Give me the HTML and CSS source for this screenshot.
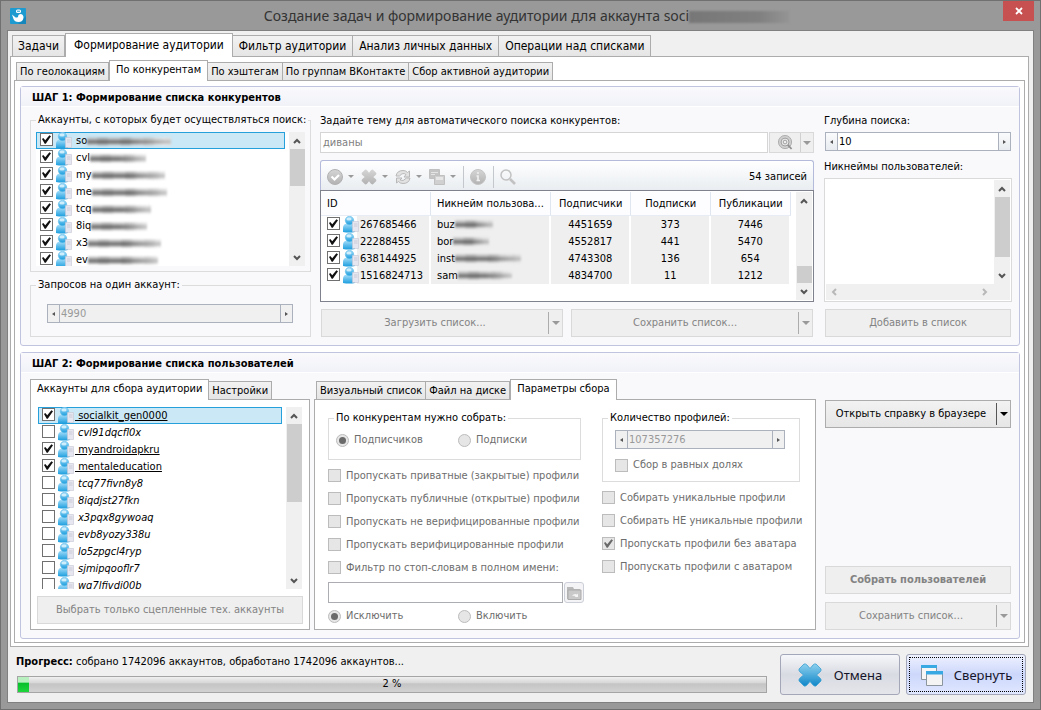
FILE: index.html
```html
<!DOCTYPE html>
<html lang="ru">
<head>
<meta charset="utf-8">
<title>Создание задач и формирование аудитории</title>
<link rel="stylesheet" href="styles.css">
</head>
<body>
<svg class="defs" width="0" height="0" aria-hidden="true">
  <defs>
    <linearGradient id="gBlue" x1="0" y1="0" x2="0" y2="1"><stop offset="0" stop-color="#a6defa"/><stop offset="1" stop-color="#1c9ede"/></linearGradient>
    <linearGradient id="gX" x1="0" y1="0" x2="0" y2="1"><stop offset="0" stop-color="#8dd0ee"/><stop offset="1" stop-color="#0f86c8"/></linearGradient>
    <linearGradient id="gGray" x1="0" y1="0" x2="0" y2="1"><stop offset="0" stop-color="#d6d6d6"/><stop offset="1" stop-color="#b2b2b2"/></linearGradient>
    <symbol id="user" viewBox="0 0 16 17">
      <path d="M0 16V12Q0 8 3.500 7.500H9Q12 8 12 11V16Q6 17 0 16Z" fill="url(#gBlue)"/>
      <circle cx="6.500" cy="4.500" r="4.200" fill="url(#gBlue)" stroke="#62bce8" stroke-width=".6"/>
      <ellipse cx="6" cy="3" rx="2.600" ry="1.600" fill="#e4f6fe" opacity=".8"/>
      <path d="M9.500 5.500H15.500V15.500H9.500Z" fill="#e6e6f0" stroke="#c6c6d4" stroke-width=".6"/>
      <path d="M11 8H14.500M11 10H14.500" stroke="#c4c4d2" stroke-width=".8"/>
    </symbol>
    <symbol id="cross" viewBox="0 0 24 24">
      <path d="M1 6L6 1Q7.500 .5 9 2L12 5.500L15 2Q16.500 .5 18 1L23 6Q23.500 7.500 22 9L18.500 12L22 15Q23.500 16.500 23 18L18 23Q16.500 23.500 15 22L12 18.500L9 22Q7.500 23.500 6 23L1 18Q.5 16.500 2 15L5.500 12L2 9Q.5 7.500 1 6Z"/>
    </symbol>
    <symbol id="up" viewBox="0 0 8 6"><path d="M1 5L4 2L7 5" fill="none" stroke="currentColor" stroke-width="2"/></symbol>
    <symbol id="down" viewBox="0 0 8 6"><path d="M1 1L4 4L7 1" fill="none" stroke="currentColor" stroke-width="2"/></symbol>
  </defs>
</svg>

<div class="window">
  <header class="titlebar">
    <svg class="app-icon" viewBox="0 0 16 16"><rect width="16" height="16" rx="1" fill="#1d9bd1"/><path d="M8 16L16 8V16Z" fill="#1587bd"/><rect x="6" y="1.500" width="5" height="3.500" rx="1.500" fill="#fff"/><path d="M7 3.200H10" stroke="#1d9bd1"/><path d="M2 6.500L5 9Q6 10 8 9Q8 6 11 6Q13.500 6.500 13.500 9.500Q13 14 8.500 14Q4.500 14 3.500 11Z" fill="#fff"/></svg>
    <h1 class="title">Создание задач и формирование аудитории для аккаунта soci<span class="smudge smudge-title"></span></h1>
    <button class="close" aria-label="Закрыть"><svg viewBox="0 0 8 8"><path d="M1 1L7 7M7 1L1 7" stroke="#fff" stroke-width="1.800"/></svg></button>
  </header>

  <main class="client">
    <nav class="tabs tabs-main">
      <button class="tab">Задачи</button>
      <button class="tab active">Формирование аудитории</button>
      <button class="tab">Фильтр аудитории</button>
      <button class="tab">Анализ личных данных</button>
      <button class="tab">Операции над списками</button>
    </nav>
    <div class="panel panel-main">
      <nav class="tabs">
        <button class="tab">По геолокациям</button>
        <button class="tab active">По конкурентам</button>
        <button class="tab">По хэштегам</button>
        <button class="tab">По группам ВКонтакте</button>
        <button class="tab">Сбор активной аудитории</button>
      </nav>
      <div class="panel panel-sub">

        <section class="step">
          <h2>ШАГ 1: Формирование списка конкурентов</h2>
          <div class="step-body step-one">
            <div class="col">
              <fieldset class="group group-list">
                <legend>Аккаунты, с которых будет осуществляться поиск:</legend>
                <div class="scroll-area area-one">
                  <ul class="list">
                    <li class="row selected"><label><input type="checkbox" checked><svg><use href="#user"/></svg>so<span class="smudge" style="width:84px"></span></label></li>
                    <li class="row"><label><input type="checkbox" checked><svg><use href="#user"/></svg>cvl<span class="smudge" style="width:56px"></span></label></li>
                    <li class="row"><label><input type="checkbox" checked><svg><use href="#user"/></svg>my<span class="smudge" style="width:73px"></span></label></li>
                    <li class="row"><label><input type="checkbox" checked><svg><use href="#user"/></svg>me<span class="smudge" style="width:75px"></span></label></li>
                    <li class="row"><label><input type="checkbox" checked><svg><use href="#user"/></svg>tcq<span class="smudge" style="width:59px"></span></label></li>
                    <li class="row"><label><input type="checkbox" checked><svg><use href="#user"/></svg>8iq<span class="smudge" style="width:56px"></span></label></li>
                    <li class="row"><label><input type="checkbox" checked><svg><use href="#user"/></svg>x3<span class="smudge" style="width:73px"></span></label></li>
                    <li class="row"><label><input type="checkbox" checked><svg><use href="#user"/></svg>ev<span class="smudge" style="width:70px"></span></label></li>
                  </ul>
                  <div class="vbar"><svg><use href="#up"/></svg><i class="thumb thumb-38"></i><svg class="end"><use href="#down"/></svg></div>
                </div>
              </fieldset>
              <fieldset class="group group-requests">
                <legend>Запросов на один аккаунт:</legend>
                <div class="spinner"><button class="spin prev" aria-label="Меньше" disabled></button><input type="text" value="4990" aria-label="Запросов на один аккаунт" disabled><button class="spin next" aria-label="Больше" disabled></button></div>
              </fieldset>
            </div>

            <div class="col">
              <label class="caption" for="topic">Задайте тему для автоматического поиска конкурентов:</label>
              <div class="search">
                <input id="topic" type="text" value="диваны" disabled>
                <div class="search-buttons">
                  <button class="find" aria-label="Найти" disabled><svg viewBox="0 0 16 16"><circle cx="7.500" cy="7.500" r="7" fill="#cfcfcf" stroke="#aaa"/><circle cx="7.500" cy="7.500" r="4.200" fill="#eee" stroke="#999"/><circle cx="7.500" cy="7.500" r="2" fill="none" stroke="#999"/><path d="M10.500 10.500L14.500 15" stroke="#8e8e8e" stroke-width="1.800"/></svg></button>
                  <button class="arrow" aria-label="Варианты поиска" disabled></button>
                </div>
              </div>
              <div class="grid-box">
                <div class="toolbar">
                  <button class="tool" aria-label="Отметить"><svg viewBox="0 0 16 16"><circle cx="8" cy="8" r="7.500" fill="url(#gGray)" stroke="#b2b2b2"/><path d="M4.500 7.500L7.500 10.500L12 6" stroke="#fff" stroke-width="2.200" fill="none"/></svg><i></i></button>
                  <button class="tool" aria-label="Удалить"><svg fill="url(#gGray)"><use href="#cross"/></svg><i></i></button>
                  <button class="tool" aria-label="Обновить"><svg viewBox="0 0 16 16" fill="#e2e2e2" stroke="#b8b8b8"><path d="M1 7Q2 1.500 8 1.500Q11 1.500 12.500 3.500L14.500 2V8H9L11 5.500Q8 3 4.500 7Z"/><path d="M15 9Q14 14.500 8 14.500Q5 14.500 3.500 12.500L1.500 14V9H7L5 11Q8 13 11.500 9Z"/></svg><i></i></button>
                  <button class="tool" aria-label="Копировать"><svg viewBox="0 0 16 16" fill="#c4c4c4" stroke="#c0c0c0"><path d="M.5 .5H10.500V9.500H.5Z"/><path d="M2 3.500H9M2 5.500H6" stroke="#e4e4e4"/><path d="M5.500 6.500H15.500V15.500H5.500Z" fill="#d0d0d0"/><path d="M7 8H14V11H7Z" fill="#e6e6e6" stroke="none"/></svg><i></i></button>
                  <button class="tool split" aria-label="Информация"><svg viewBox="0 0 16 16"><circle cx="8" cy="8" r="7.500" fill="url(#gGray)" stroke="#c4c4c4"/><path d="M7 4H9M6.500 7H8V11M6.500 11.500H10" stroke="#f0f0f0" stroke-width="1.600" fill="none"/></svg></button>
                  <button class="tool split" aria-label="Поиск"><svg viewBox="0 0 16 16" fill="none" stroke="#c2c2c2"><circle cx="6" cy="6" r="5" stroke-width="1.500"/><path d="M10 10L15 15" stroke-width="2.600"/></svg></button>
                  <span class="count">54 записей</span>
                </div>
                <div class="grid">
                  <div class="table-wrap">
                  <table>
                    <colgroup><col class="c-id"><col class="c-nick"><col class="c-num"><col class="c-num"><col class="c-num"></colgroup>
                    <thead><tr><th>ID</th><th>Никнейм пользова...</th><th>Подписчики</th><th>Подписки</th><th>Публикации</th></tr></thead>
                    <tbody>
                      <tr><td><label><input type="checkbox" checked><svg><use href="#user"/></svg>267685466</label></td><td>buz<span class="smudge" style="width:38px"></span></td><td>4451659</td><td>373</td><td>7446</td></tr>
                      <tr><td><label><input type="checkbox" checked><svg><use href="#user"/></svg>22288455</label></td><td>bor<span class="smudge" style="width:36px"></span></td><td>4552817</td><td>441</td><td>5470</td></tr>
                      <tr><td><label><input type="checkbox" checked><svg><use href="#user"/></svg>638144925</label></td><td>inst<span class="smudge" style="width:66px"></span></td><td>4743308</td><td>136</td><td>654</td></tr>
                      <tr><td><label><input type="checkbox" checked><svg><use href="#user"/></svg>1516824713</label></td><td>sam<span class="smudge" style="width:54px"></span></td><td>4834700</td><td>11</td><td>1212</td></tr>
                    </tbody>
                  </table>
                  </div>
                  <div class="vbar"><svg><use href="#up"/></svg><i class="thumb thumb-low"></i><svg class="end"><use href="#down"/></svg></div>
                </div>
              </div>
              <div class="pair">
                <div class="split-button"><button class="btn" disabled>Загрузить список...</button><button class="drop" aria-label="Варианты загрузки" disabled></button></div>
                <div class="split-button"><button class="btn" disabled>Сохранить список...</button><button class="drop" aria-label="Варианты сохранения" disabled></button></div>
              </div>
            </div>

            <div class="col">
              <label class="caption" for="depth">Глубина поиска:</label>
              <div class="spinner live"><button class="spin prev" aria-label="Меньше"></button><input id="depth" type="text" value="10"><button class="spin next" aria-label="Больше"></button></div>
              <label class="caption caption-nick" for="nick">Никнеймы пользователей:</label>
              <div class="memo">
                <textarea id="nick"></textarea>
                <div class="vbar"><svg><use href="#up"/></svg><i class="thumb thumb-60"></i><svg class="end"><use href="#down"/></svg></div>
                <div class="hbar"><svg viewBox="0 0 6 8"><path d="M5 1L2 4L5 7" fill="none" stroke="#b8b8b8" stroke-width="2"/></svg><svg viewBox="0 0 6 8"><path d="M1 1L4 4L1 7" fill="none" stroke="#b8b8b8" stroke-width="2"/></svg></div>
              </div>
              <button class="btn inset" disabled>Добавить в список</button>
            </div>
          </div>
        </section>

        <section class="step">
          <h2>ШАГ 2: Формирование списка пользователей</h2>
          <div class="step-body step-two">
            <div class="tabset">
              <nav class="tabs tabs-flush">
                <button class="tab active">Аккаунты для сбора аудитории</button>
                <button class="tab">Настройки</button>
              </nav>
              <div class="panel panel-accounts">
                <div class="scroll-area area-two">
                  <ul class="list">
                    <li class="row selected"><label><input type="checkbox" checked><svg><use href="#user"/></svg><u>&nbsp;socialkit_gen0000</u></label></li>
                    <li class="row"><label><input type="checkbox"><svg><use href="#user"/></svg><em>cvl91dqcfl0x</em></label></li>
                    <li class="row"><label><input type="checkbox" checked><svg><use href="#user"/></svg><u>&nbsp;myandroidapkru</u></label></li>
                    <li class="row"><label><input type="checkbox" checked><svg><use href="#user"/></svg><u>&nbsp;mentaleducation</u></label></li>
                    <li class="row"><label><input type="checkbox"><svg><use href="#user"/></svg><em>tcq77fivn8y8</em></label></li>
                    <li class="row"><label><input type="checkbox"><svg><use href="#user"/></svg><em>8iqdjst27fkn</em></label></li>
                    <li class="row"><label><input type="checkbox"><svg><use href="#user"/></svg><em>x3pqx8gywoaq</em></label></li>
                    <li class="row"><label><input type="checkbox"><svg><use href="#user"/></svg><em>evb8yozy338u</em></label></li>
                    <li class="row"><label><input type="checkbox"><svg><use href="#user"/></svg><em>lo5zpgcl4ryp</em></label></li>
                    <li class="row"><label><input type="checkbox"><svg><use href="#user"/></svg><em>sjmipqooflr7</em></label></li>
                    <li class="row"><label><input type="checkbox"><svg><use href="#user"/></svg><em>wq7lfivdi00b</em></label></li>
                  </ul>
                  <div class="vbar"><svg><use href="#up"/></svg><i class="thumb thumb-78"></i><svg class="end"><use href="#down"/></svg></div>
                </div>
                <button class="btn" disabled>Выбрать только сцепленные тех. аккаунты</button>
              </div>
            </div>

            <div class="tabset">
              <nav class="tabs">
                <button class="tab">Визуальный список</button>
                <button class="tab">Файл на диске</button>
                <button class="tab active">Параметры сбора</button>
              </nav>
              <div class="panel panel-options">
                <div class="options">
                  <fieldset class="group group-radio">
                    <legend>По конкурентам нужно собрать:</legend>
                    <div class="radios"><label><input type="radio" name="src" checked disabled>Подписчиков</label><label><input type="radio" name="src" disabled>Подписки</label></div>
                  </fieldset>
                  <div class="checks">
                    <label><input type="checkbox" disabled>Пропускать приватные (закрытые) профили</label>
                    <label><input type="checkbox" disabled>Пропускать публичные (открытые) профили</label>
                    <label><input type="checkbox" disabled>Пропускать не верифицированные профили</label>
                    <label><input type="checkbox" disabled>Пропускать верифицированные профили</label>
                    <label><input type="checkbox" disabled>Фильтр по стоп-словам в полном имени:</label>
                  </div>
                  <div class="stopwords">
                    <input type="text" aria-label="Стоп-слова">
                    <button aria-label="Открыть файл" disabled><svg viewBox="0 0 16 16"><path d="M1 2H7L8 4H14V14H1Z" fill="#b9b9b9"/><path d="M2 5H15V14.500H2Z" fill="#c9c9c9" stroke="#ababab"/><path d="M6 11Q8 8 11 9.500L12 8.500V12H8.500L9.500 11Q8 10.500 6 11Z" fill="#f4f4f4"/></svg></button>
                  </div>
                  <div class="radios"><label><input type="radio" name="mode" checked disabled>Исключить</label><label><input type="radio" name="mode" disabled>Включить</label></div>
                </div>
                <div class="options">
                  <fieldset class="group group-count">
                    <legend>Количество профилей:</legend>
                    <div class="spinner"><button class="spin prev" aria-label="Меньше" disabled></button><input type="text" value="107357276" aria-label="Количество профилей" disabled><button class="spin next" aria-label="Больше" disabled></button></div>
                    <label class="equal"><input type="checkbox" disabled>Сбор в равных долях</label>
                  </fieldset>
                  <div class="checks">
                    <label><input type="checkbox" disabled>Собирать уникальные профили</label>
                    <label><input type="checkbox" disabled>Собирать НЕ уникальные профили</label>
                    <label><input type="checkbox" checked disabled>Пропускать профили без аватара</label>
                    <label><input type="checkbox" disabled>Пропускать профили с аватаром</label>
                  </div>
                </div>
              </div>
            </div>

            <div class="actions">
              <div class="split-button live"><button class="btn">Открыть справку в браузере</button><button class="drop" aria-label="Варианты справки"></button></div>
              <button class="btn strong" disabled>Собрать пользователей</button>
              <div class="split-button"><button class="btn" disabled>Сохранить список...</button><button class="drop" aria-label="Варианты сохранения" disabled></button></div>
            </div>
          </div>
        </section>
      </div>
    </div>

    <footer class="footer">
      <div class="status">
        <p><b>Прогресс:</b> собрано 1742096 аккаунтов, обработано 1742096 аккаунтов...</p>
        <div class="progress" role="progressbar" aria-valuenow="2"><i style="width:11px"></i><span>2 %</span></div>
      </div>
      <button class="big"><svg fill="url(#gX)" stroke="#3a9fd2" stroke-width=".8"><use href="#cross"/></svg>Отмена</button>
      <button class="big primary"><svg viewBox="0 0 24 24"><path d="M1.500 2.500H16.500V16.500H1.500Z" fill="#f6f6f6" stroke="#8b959d"/><path d="M1 2H17V5H1Z" fill="#38a9e2"/><path d="M6.500 8.500H22.500V22.500H6.500Z" fill="#f4f4f4" stroke="#8b959d"/><path d="M6 8H23V11.500H6Z" fill="#38a9e2"/></svg>Свернуть</button>
    </footer>
  </main>
</div>
</body>
</html>
```

FILE: styles.css
```css
* { box-sizing: border-box; }
body {
  margin: 0;
  font: 11px/14px "DejaVu Sans Condensed", "Noto Sans", sans-serif;
  color: #000;
}
button, input, textarea { font: inherit; color: inherit; margin: 0; padding: 0; border-radius: 0; }
h1, h2, p, ul { margin: 0; padding: 0; }
ul { list-style: none; }
svg { display: block; flex: none; }
.defs { position: absolute; }

.window {
  min-height: 100vh;
  display: flex;
  flex-direction: column;
  background: #999;
  border: 1px solid #707070;
  padding: 0 6px 6px;
}
.titlebar { display: flex; align-items: center; height: 29px; }
.app-icon { width: 16px; height: 16px; margin-left: 3px; }
.title {
  flex: 1;
  padding-left: 24px;
  text-align: center;
  font: 14px/20px "Noto Sans", sans-serif;
  color: #333;
  white-space: nowrap;
}
.close {
  align-self: flex-start;
  width: 31px;
  height: 20px;
  border: 0;
  background: #c75050;
  display: grid;
  place-items: center;
}
.close svg { width: 8px; height: 8px; }

.client {
  flex: 1;
  display: flex;
  flex-direction: column;
  background: #f0f0f0;
  border: 1px solid #808080;
  padding-top: 2px;
}

/* tabs */
.tabs { display: flex; align-items: flex-end; padding-left: 2px; height: 20px; }
.tabs-flush { padding-left: 0; }
.tabs-main { height: 23px; padding-left: 4px; font-size: 12px; }
.tab {
  height: 18px;
  padding: 0 3px;
  border: 1px solid #acacac;
  border-bottom: 0;
  background: linear-gradient(#f2f2f2, #e5e5e5);
  white-space: nowrap;
}
.tab + .tab { border-left: 0; }
.tabs-main .tab { height: 21px; padding: 0 5px; }
.tabs-main .active ~ .tab { padding: 0 6px; }
.tab.active {
  position: relative;
  height: 21px;
  padding: 0 6px 2px;
  margin-bottom: -1px;
  background: #fff;
  border-left: 1px solid #acacac;
}
.tabs-main .tab.active { height: 24px; padding: 0 8px 2px; }
.panel { background: #fff; border: 1px solid #acacac; }
.panel-main { margin: 0 4px 0 2px; padding: 3px; }
.panel-sub { padding: 5px 4px 3px 5px; display: grid; gap: 6px; }

/* steps */
.step { border: 1px solid #c0c4de; border-radius: 3px; background: #f9f9fc; }
.step h2 {
  height: 20px;
  padding: 1px 0 0 11px;
  font-size: 11px;
  line-height: 19px;
  background: linear-gradient(#fafafd, #f1f2f8);
  border-bottom: 1px solid #fff;
}
.step-body { display: grid; }
.step-one { grid-template-columns: 281px minmax(0, 1fr) 188px; padding: 6px 7px 8px 9px; }
.step-one .col:nth-child(2) { margin: 0 10px 0 9px; }
.step-two { grid-template-columns: 280px minmax(0, 1fr) 186px; column-gap: 4px; padding: 6px 8px 8px 9px; }
.col { display: flex; flex-direction: column; min-width: 0; }

.group { --inset: 0px; border: 1px solid #dcdcdc; margin: 0; min-width: 0; padding-left: var(--inset); }
.group legend { margin-left: calc(5px - var(--inset)); padding: 0 2px; white-space: nowrap; }
.group-list { --inset: 5px; padding: 5px 5px 5px var(--inset); margin-bottom: 6px; }
.group-requests { --inset: 16px; padding: 12px 17px 13px var(--inset); }

.scroll-area { display: flex; background: #fff; }
.area-one { height: 134px; }
.area-two { height: 182px; margin: 0 1px; }
.list { flex: 1; overflow: hidden; min-width: 0; }
.row { height: 17px; padding-left: 4px; margin-right: 4px; white-space: nowrap; }
.row.selected { background: #cbe8f6; box-shadow: inset 0 0 0 1px #26a0da; }
.row label, td label { display: flex; align-items: center; height: 17px; padding-top: 1px; }
.row input, td input { margin-bottom: 3px; }
.row svg, td svg { width: 16px; height: 17px; margin: 0 4px 2px 3px; }
.area-two u { margin-left: -3px; }

/* smeared names */
.smudge {
  display: inline-block;
  height: 9px;
  vertical-align: middle;
  background:
    linear-gradient(90deg, transparent 50%, rgba(255, 255, 255, .6)),
    repeating-linear-gradient(90deg, transparent 0 9px, rgba(0, 0, 0, .08) 12px 19px, transparent 23px),
    linear-gradient(rgba(190, 190, 190, .3), #aaa 30%, #666 55%, #b4b4b4 80%, transparent);
  filter: blur(1px);
}
.smudge-title { width: 100px; height: 12px; background: linear-gradient(90deg, #777, #808080 70%, #949494); }

/* tick boxes and radios */
input[type="checkbox"], input[type="radio"] {
  appearance: none;
  flex: none;
  width: 13px;
  height: 13px;
  border: 1px solid #707070;
  background: #fff;
  display: grid;
  place-items: center;
}
input[type="checkbox"]:checked::before {
  content: "";
  width: 9px;
  height: 9px;
  background: #111;
  clip-path: polygon(0 44%, 14% 33%, 36% 58%, 82% 3%, 100% 14%, 42% 97%, 30% 97%);
}
input[type="checkbox"]:disabled, input[type="radio"]:disabled { background: #e6e6e6; border-color: #bcbcbc; }
input[type="checkbox"]:disabled::before { background: #6a6a6a; }
input[type="radio"] { border-radius: 50%; }
input[type="radio"]:checked::before { content: ""; width: 7px; height: 7px; border-radius: 50%; background: #6a6a6a; }

/* scroll bars */
.vbar { width: 16px; background: #f0f0f0; display: flex; flex-direction: column; align-items: center; color: #555; }
.vbar svg { width: 8px; height: 6px; margin: 6px 0 5px; }
.vbar .end { margin: auto 0 5px; }
.thumb { width: 15px; background: #cdcdcd; }
.thumb-38 { height: 37px; }
.thumb-60 { height: 60px; }
.thumb-78 { height: 78px; }
.thumb-low { height: 17px; margin-top: 57px; }
.hbar { grid-column: 1 / 3; background: #f0f0f0; display: flex; justify-content: space-between; align-items: center; padding: 0 22px 0 5px; }
.hbar svg { width: 6px; height: 8px; }

/* spinners */
.spinner { display: flex; height: 19px; border: 1px solid #abb2bd; color: #999; background: #f0f0f0; }
.spinner.live { background: #fff; color: #000; margin: 0 1px; }
.spinner input { flex: 1; min-width: 0; border: 0; padding: 0 1px; background: none; }
.spin { width: 12px; border: 0; background: #f0f0f0; display: grid; place-items: center; }
.live .spin { background: linear-gradient(#fafbfc, #e8ecf0); }
.prev { border-right: 1px solid #abb2bd; }
.next { border-left: 1px solid #abb2bd; }
.spin::before { content: ""; border: 2px solid transparent; }
.prev::before { border-right: 3px solid #555; border-left: 0; }
.next::before { border-left: 3px solid #555; border-right: 0; }

/* search and table */
.caption { height: 19px; padding-top: 1px; white-space: nowrap; }
.caption-nick { margin-top: 8px; }
.search { display: flex; gap: 1px; height: 21px; margin-bottom: 7px; }
.search input { flex: 1; min-width: 0; border: 1px solid #d5d5d5; background: #fff; color: #808080; padding: 0 2px; }
.search-buttons { display: flex; width: 45px; border: 1px solid #d9d9d9; background: #efefef; }
.search-buttons button { border: 0; background: none; display: grid; place-items: center; }
.find { flex: 1; }
.find svg { width: 15px; height: 15px; }
.arrow { width: 13px; }
.search-buttons .arrow { border-left: 1px solid #d0d0d0; }
.arrow::before, .drop::before, .tool i {
  content: "";
  border: 4px solid transparent;
  border-top: 4px solid #999;
  border-bottom: 0;
}
.grid-box { flex: 1; display: flex; flex-direction: column; }
.toolbar {
  display: flex;
  align-items: center;
  height: 30px;
  padding: 2px 6px 0;
  border: 1px solid #b4bad9;
  border-bottom: 0;
  border-radius: 3px 3px 0 0;
  background: linear-gradient(#fff, #e9edf1);
}
.tool { display: flex; align-items: center; gap: 5px; width: 34px; border: 0; background: none; }
.tool svg { width: 16px; height: 16px; }
.tool i { border-width: 3px 3px 0; }
.tool.split { width: 30px; height: 22px; border-left: 1px solid #c4c8cc; padding-left: 6px; }
.count { margin-left: auto; }
.grid { flex: 1; display: flex; border: 1px solid #7f828c; background: #fff; padding: 1px 1px 1px 0; }
.grid .vbar { margin-left: auto; }
.table-wrap { flex: 1; min-width: 0; overflow: hidden; }
table { border-collapse: separate; border-spacing: 0; table-layout: fixed; width: 99%; }
.c-id { width: 110px; }
.c-nick { width: auto; }
.c-num { width: 80px; }
th { height: 24px; padding: 1px 0 0 6px; font-weight: normal; text-align: left; white-space: nowrap; overflow: hidden; border-right: 1px solid #dfe6f0; border-bottom: 1px solid #e8ecf4; background: #fdfdff; }
td { height: 17px; padding: 0 0 0 6px; background: #efefef; border-right: 2px solid #fff; white-space: nowrap; }
td:nth-child(n+3), th:nth-child(n+3) { text-align: center; padding-left: 0; }
td:first-child { background: linear-gradient(90deg, #fff 36px, #efefef 36px); }
td svg { margin-right: 1px; }

/* buttons */
.pair { display: grid; grid-template-columns: 1fr 1fr; gap: 8px; margin: 7px 1px 0; }
.btn { height: 28px; border: 1px solid #acacac; background: linear-gradient(#f2f2f2, #e6e6e6); white-space: nowrap; }
.btn:disabled { border-color: #d9d9d9; background: #efefef; color: #838383; }
.strong { font-weight: bold; }
.inset { margin: 7px 1px 0; }
.split-button { display: flex; height: 28px; border: 1px solid #d9d9d9; background: #efefef; }
.split-button.live { border-color: #acacac; background: linear-gradient(#f2f2f2, #e6e6e6); }
.split-button .btn { flex: 1; height: 100%; border: 0; background: none; }
.drop { width: 14px; height: 22px; margin: 2px 0; border: 0; border-left: 1px solid #acacac; background: none; display: grid; place-items: center; }
.live .drop { border-left-color: #555; }
.live .drop::before { border-top-color: #000; }

.memo { flex: 1; display: grid; grid-template: 1fr 16px / 1fr 16px; border: 1px solid #dadada; background: #fff; padding: 1px; }
.memo textarea { border: 0; resize: none; min-width: 0; background: #fff; overflow: hidden; }

/* step two */
.tabset { min-width: 0; }
.panel-accounts { padding: 7px 6px 5px; display: grid; gap: 7px; }
.panel-options { display: grid; grid-template-columns: 253fr 198fr; column-gap: 21px; padding: 11px 15px 6px 13px; margin-right: 5px; color: #6d6d6d; white-space: nowrap; }
.options { min-width: 0; }
.options legend { color: #000; }
.group-radio { --inset: 7px; padding: 8px 7px 12px var(--inset); }
.group-count { --inset: 12px; padding: 5px 14px 9px var(--inset); }
.radios { display: grid; grid-template-columns: 122px 1fr; }
.options > .radios { margin-top: 6px; grid-template-columns: 130px 1fr; }
.radios label, .checks label, .equal { display: flex; align-items: center; gap: 5px; }
.checks { padding-top: 4px; }
.checks label { height: 23px; }
.equal { margin-top: 9px; }
.stopwords { display: flex; gap: 1px; height: 21px; margin-top: 3px; margin-right: -3px; }
.stopwords input { flex: 1; min-width: 0; border: 1px solid #abadb3; background: #fff; }
.stopwords button { width: 20px; border: 1px solid #ccced8; border-radius: 3px; background: #f4f4f6; display: grid; place-items: center; }
.stopwords svg { width: 16px; height: 16px; }
.actions { display: flex; flex-direction: column; gap: 8px; padding-top: 21px; }
.actions .strong { margin-top: auto; }

/* footer */
.footer { display: flex; align-items: flex-start; gap: 6px; padding: 7px 7px 7px 8px; }
.status { flex: 1; margin-right: 7px; }
.status p { height: 22px; padding-top: 1px; }
.progress { position: relative; margin-left: 1px; height: 17px; border: 1px solid #a5a5a5; background: linear-gradient(#f0f0f0, #d6d6d6 40%, #c4c4c4 45%, #d2d2d2); }
.progress i { display: block; height: 100%; background: linear-gradient(#b8f0c0 35%, #06bf2a 40%, #1ed63c); }
.progress span { position: absolute; inset: 0; text-align: center; }
.big { display: flex; align-items: center; justify-content: center; gap: 12px; width: 120px; height: 41px; font: 13px/16px "Noto Sans", sans-serif; color: #15152a; border: 1px solid #a3a7b7; border-radius: 3px; background: linear-gradient(#f6f7f9, #d9dbe3 50%, #e4e5ea); }
.big svg { width: 24px; height: 24px; }
.big.primary { background: linear-gradient(#eef1ff, #ccd7fb 50%, #e0e7ff); outline: 1px dotted #000; outline-offset: -4px; gap: 10px; }
```
